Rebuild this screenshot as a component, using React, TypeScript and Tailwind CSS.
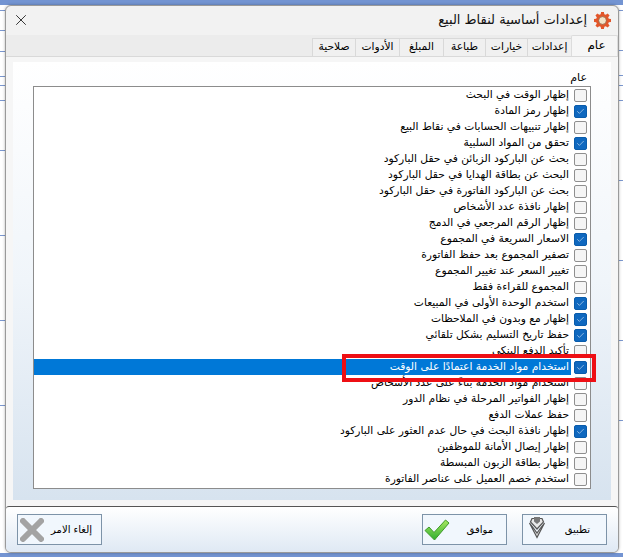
import { Check, X } from 'lucide-react';

const rows: { label: string; checked?: boolean; selected?: boolean }[] = [
  { label: 'إظهار الوقت في البحث' },
  { label: 'إظهار رمز المادة', checked: true },
  { label: 'إظهار تنبيهات الحسابات في نقاط البيع' },
  { label: 'تحقق من المواد السلبية', checked: true },
  { label: 'بحث عن الباركود الزبائن في حقل الباركود' },
  { label: 'البحث عن بطاقة الهدايا في حقل الباركود' },
  { label: 'بحث عن الباركود الفاتورة في حقل الباركود' },
  { label: 'إظهار نافذة عدد الأشخاص' },
  { label: 'إظهار الرقم المرجعي في الدمج' },
  { label: 'الاسعار السريعة في المجموع', checked: true },
  { label: 'تصفير المجموع بعد حفظ الفاتورة' },
  { label: 'تغيير السعر عند تغيير المجموع' },
  { label: 'المجموع للقراءة فقط' },
  { label: 'استخدم الوحدة الأولى في المبيعات', checked: true },
  { label: 'إظهار مع وبدون في الملاحظات', checked: true },
  { label: 'حفظ تاريخ التسليم بشكل تلقائي', checked: true },
  { label: 'تأكيد الدفع البنكي' },
  { label: 'استخدام مواد الخدمة اعتمادًا على الوقت', checked: true, selected: true },
  { label: 'استخدام مواد الخدمة بناءً على عدد الأشخاص' },
  { label: 'إظهار الفواتير المرحلة في نظام الدور' },
  { label: 'حفظ عملات الدفع' },
  { label: 'إظهار نافذة البحث في حال عدم العثور على الباركود', checked: true },
  { label: 'إظهار إيصال الأمانة للموظفين' },
  { label: 'إظهار بطاقة الزبون المبسطة' },
  { label: 'استخدم خصم العميل على عناصر الفاتورة' },
];

const tabs = [
  { label: 'إعدادات', w: 'w-[44px]' },
  { label: 'خيارات', w: 'w-[42px]' },
  { label: 'طباعة', w: 'w-[42px]' },
  { label: 'المبلغ', w: 'w-[44px]' },
  { label: 'الأدوات', w: 'w-[44px]' },
  { label: 'صلاحية', w: 'w-[43px]' },
];

// little blue ticks of the window behind the dialog
const leftTicks = [10, 30, 51, 76, 85, 100, 150, 235, 320, 405];
const rightTicks = [10, 50, 75, 85, 100, 180, 260, 340, 420];

function GearIcon() {
  return (
    <svg width="17" height="17" viewBox="0 0 24 24">
      <path
        d="M10 1h4l.6 3.2 2 .8L19.3 3 22 5.8l-2 2.6.9 2 3.1.6v4l-3.1.6-.9 2 2 2.6-2.7 2.8-2.7-2-2 .8L14 25h-4l-.6-3.2-2-.8L4.700 23 2 20.200l2-2.600-.9-2L0 15v-4l3.100-.6.9-2-2-2.600L4.700 3l2.700 2 2-.8z"
        transform="translate(0 -1)"
        fill="#e2562a"
      />
      <circle cx="12" cy="12" r="5.5" fill="#f3e3c8" stroke="#8a4a2a" strokeWidth="1" />
    </svg>
  );
}

function ApplyIcon() {
  return (
    <svg width="18" height="24" viewBox="0 0 18 24" fill="none">
      <path d="M1.500 8 9 22.500 16.500 8 13 12.500 9 18 5 12.500z" fill="#d8d8d8" stroke="#555" strokeWidth="1.200" />
      <path d="M4 3.500h10l1.500 3.500L9 14 2.500 7z" fill="#e8e8e8" stroke="#555" strokeWidth="1.200" />
      <path d="M6 2h6v4.500L9 9 6 6.500z" fill="#777" />
    </svg>
  );
}

function OkIcon() {
  return (
    <svg width="26" height="22" viewBox="0 0 26 22">
      <defs>
        <linearGradient id="okGreen" x1="0" y1="0" x2="0" y2="1">
          <stop offset="0" stopColor="#a8e860" />
          <stop offset="1" stopColor="#2fae2f" />
        </linearGradient>
      </defs>
      <path d="M1 11.500 5 8l5 5.500L21.500 1 25 4 10.500 21z" fill="url(#okGreen)" stroke="#3f9a2a" strokeWidth="1" />
    </svg>
  );
}

function CancelIcon() {
  return (
    <svg width="24" height="24" viewBox="0 0 24 24">
      <path d="M3 3 21 21M21 3 3 21" stroke="#a3a3a3" strokeWidth="6" strokeLinecap="round" />
    </svg>
  );
}

function FooterButton({ label, icon, className }: { label: string; icon: React.ReactNode; className: string }) {
  return (
    <div className={`flex h-[31px] w-[85px] items-center border border-[#7d93a8] bg-[#f1f7fd] ${className}`}>
      {icon}
      <span className="text-[10px] text-black">{label}</span>
    </div>
  );
}

export default function App() {
  return (
    <div
      dir="rtl"
      className="relative flex h-[557px] w-[623px] flex-col overflow-hidden bg-white font-['DejaVu_Sans',sans-serif] text-[10px] text-black"
    >
      {leftTicks.map((y) => (
        <div key={y} className="absolute left-0 h-px w-[5px] bg-[#7b97cf]" style={{ top: y }} />
      ))}
      {rightTicks.map((y) => (
        <div key={y} className="absolute right-0 h-px w-[4px] bg-[#7b97cf]" style={{ top: y }} />
      ))}
      <div className="h-[5px] shrink-0 bg-[#7394d2]" />
      <div className="relative mr-[4px] ml-[5px] flex h-[548px] flex-col overflow-hidden rounded-t-[6px] rounded-b-[6px] border border-[#9a9a9a] bg-[#f2f2f2] shadow-[0_0_3px_rgba(0,0,0,0.3)]">
        {/* Title bar */}
        <div className="flex h-[29px] shrink-0 items-center gap-[7px] pr-[7px] pl-[6px]">
          <GearIcon />
          <span className="pb-[2px] text-[13px] text-[#111]">إعدادات أساسية لنقاط البيع</span>
          <X className="mr-auto mb-[1px]" size={18} strokeWidth={1.2} color="#222" />
        </div>
        {/* Tabs */}
        <div className="flex h-[21px] shrink-0 items-end bg-[#ececec]">
          <div className="z-10 flex h-[21px] w-[47px] items-center justify-center rounded-t-[2px] border-x border-t border-[#dcdcdc] bg-[#f6f6f6] pb-[3px] pl-[4px] text-[12px]">
            عام
          </div>
          {tabs.map((t) => (
            <div
              key={t.label}
              className={`flex h-[18px] items-center justify-center border-t border-l border-[#d9d9d9] bg-[#f0f0f0] text-[10.700px] ${t.w}`}
            >
              {t.label}
            </div>
          ))}
        </div>
        {/* Tab page */}
        <div className="flex h-[450px] shrink-0 flex-col border-t border-[#d9d9d9] bg-[#f6f6f6] px-[7px] pt-[5px] pb-[6px]">
          <div className="flex flex-1 flex-col bg-gradient-to-b from-white via-[#f0f5fa] to-[#d7e3ef] pt-[9px] pr-[20px] pl-[20px]">
            <div className="h-[15px] pr-[4px] text-[11px] leading-[14px]">عام</div>
            <div className="flex h-[403px] flex-col border border-[#8c8c8c] bg-white">
              {rows.map((r) => (
                <div key={r.label} className="flex h-[16px] shrink-0 items-center">
                  <div
                    className={`ml-[3px] flex h-[13px] w-[13px] shrink-0 items-center justify-center rounded-[2px] border ${
                      r.checked ? 'border-[#0a5cab] bg-[#0f68bf]' : 'border-[#8f8f8f] bg-[#f5f5f5]'
                    } mr-[3px]`}
                  >
                    {r.checked && <Check size={9} strokeWidth={1.6} color="#dbe9f8" />}
                  </div>
                  <div
                    className={`flex h-[16px] flex-1 items-center overflow-hidden whitespace-nowrap pr-[2px] text-[10.700px] ${
                      r.selected ? 'bg-[#0078d7] text-white' : ''
                    }`}
                  >
                    {r.label}
                  </div>
                </div>
              ))}
            </div>
          </div>
        </div>
        {/* Footer */}
        <div className="flex flex-1 items-center gap-[15px] rounded-t-[3px] border-t border-[#555] bg-gradient-to-b from-white to-[#dfe9f4] pr-[11px] pl-[11px]">
          <FooterButton label="تطبيق" icon={<span className="mr-[4px] flex w-[22px]" />} className="flex-row-reverse justify-between pl-[5px] [&>span:last-child]:mr-[16px]" />
          <FooterButton label="موافق" icon={<OkIcon />} className="flex-row-reverse justify-between pl-[1px] [&>span:last-child]:mr-[13px]" />
          <div className="mr-auto">
            <FooterButton label="إلغاء الامر" icon={<CancelIcon />} className="flex-row-reverse justify-between pl-[2px] [&>span:last-child]:mr-[9px]" />
          </div>
        </div>
      </div>
      {/* Highlight drawn on the screenshot */}
      <div className="absolute top-[354px] left-[342px] h-[28px] w-[254px] border-[4px] border-[#ee0f14]" />
      <div className="absolute top-[515px] left-[528px]">
        <ApplyIcon />
      </div>
      <div className="mt-auto h-[4px] shrink-0 bg-[#7394d2]" />
    </div>
  );
}
